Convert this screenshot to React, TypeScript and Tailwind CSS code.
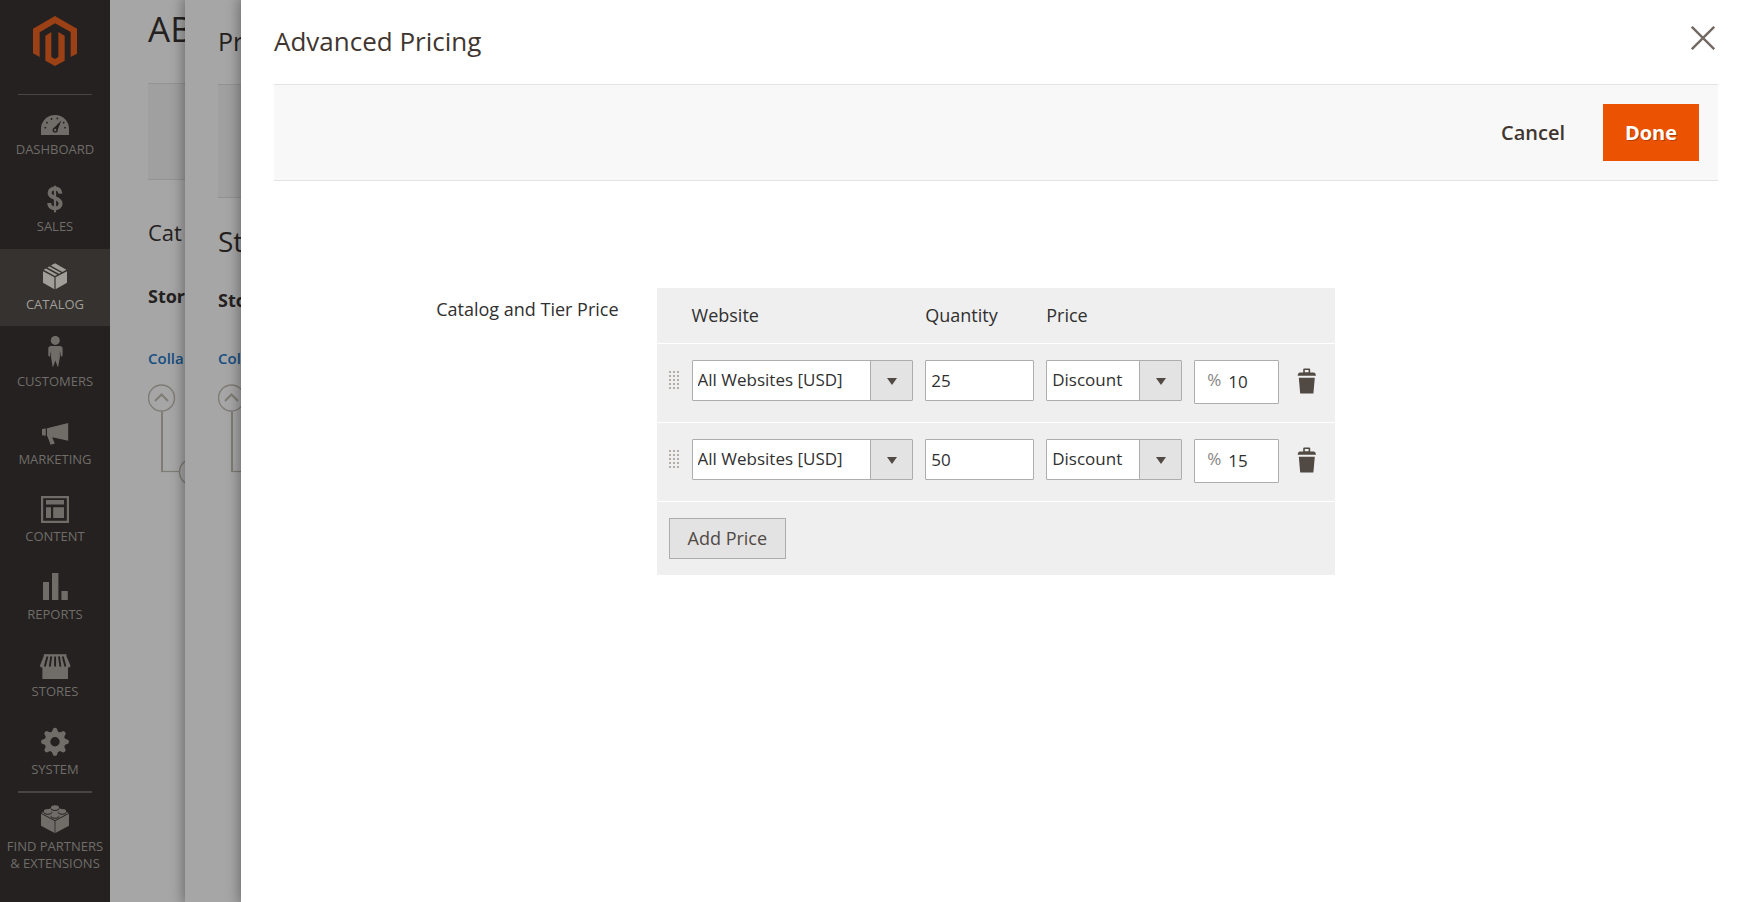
import { useState, type ReactNode } from "react";

type NavItem = { label: string; icon: ReactNode; active?: boolean };

const teeth = [0, 45, 90, 135, 180, 225, 270, 315];

const navItems: NavItem[] = [
  {
    label: "Dashboard",
    icon: (
      <>
        <path d="M4 31V25a14 14 0 0 1 28 0v6z" />
        <g fill="#242120">
          <circle cx="8.3" cy="23.7" r="0.9" />
          <circle cx="10" cy="18.7" r="0.9" />
          <circle cx="14.5" cy="15" r="0.9" />
          <circle cx="20.3" cy="14.4" r="0.9" />
          <circle cx="26.7" cy="18.7" r="0.9" />
          <circle cx="28" cy="23.7" r="0.9" />
          <path d="M24.3 16.4L20.4 26.4L16.6 24.3z" />
          <circle cx="18.2" cy="26" r="2.6" />
        </g>
        <circle cx="18.2" cy="26" r="1.2" />
      </>
    ),
  },
  {
    label: "Sales",
    icon: (
      <g fill="none" stroke="currentColor">
        <path
          strokeWidth="4"
          d="M23.4 12.6C23 9 20.8 7.6 18 7.6C14.6 7.6 12.6 9.4 12.6 12C12.6 18 23.6 16 23.6 22.4C23.6 25.6 21.3 27.3 18 27.3C14.6 27.3 12.4 25.6 12.2 22"
        />
        <path strokeWidth="2.2" d="M18 4.7V31.3" />
      </g>
    ),
  },
  {
    label: "Catalog",
    active: true,
    icon: (
      <>
        <path d="M6 12.2L17.4 18.2V30.2L6 23.8z" />
        <path d="M18.6 18.2L30 12.2V23.8L18.6 30.2z" />
        <path d="M18 4.2L29.4 10.7L25.4 12.9L13.8 6.6z" />
        <path d="M12.4 7.4L24 13.7L22 14.8L10.4 8.5z" />
        <path d="M9 9.4L20.4 15.7L18 17.1L6.6 10.8z" />
      </>
    ),
  },
  {
    label: "Customers",
    icon: (
      <>
        <circle cx="18.3" cy="4.4" r="4.5" />
        <path d="M14 10H22.8C24.6 10 25.6 11 25.6 12.8V19.5L24 21L22.8 14.5L22.9 21L21.2 30.8H20.6L18.4 24.5L16.2 30.8H15.6L14 21L14.1 14.5L12.9 21L11.3 19.5V12.8C11.3 11 12.3 10 14 10z" />
      </>
    ),
  },
  {
    label: "Marketing",
    icon: (
      <>
        <path d="M5 15L8.8 14.4V21.8L5 21.2z" />
        <path d="M10 14.2L31.2 9V26.8L15.2 23.2L17.8 29.4L13.6 30.7L10.4 22.2H10z" />
      </>
    ),
  },
  {
    label: "Content",
    icon: (
      <>
        <path fillRule="evenodd" d="M4 5H32V32H4zM6.2 7.2V29.8H29.8V7.2z" />
        <path d="M9 9H27V13.6H9zM9 16.2H14V27H9zM16.2 16.2H27V27H16.2z" />
      </>
    ),
  },
  {
    label: "Reports",
    icon: <path d="M6 13H12V31H6zM15 4H21.4V31H15zM24.4 22H30.8V31H24.4z" />,
  },
  {
    label: "Stores",
    icon: (
      <>
        <path d="M6.8 8.2H29.4V10H6.8z" />
        <path d="M6.8 10H29.4L33.4 19.4C33.2 21 32.4 21.6 31 21.6V33H5.4V21.6C4 21.6 3.2 21 3 19.4z" />
        <g stroke="#242120" strokeWidth="1.9">
          <path d="M10.4 10.4L7.8 20.6M14.2 10.4L12.8 20.6M18.1 10.4V20.6M22 10.4L23.4 20.6M25.8 10.4L28.4 20.6" />
        </g>
      </>
    ),
  },
  {
    label: "System",
    icon: (
      <>
        <circle cx="18" cy="17.8" r="7.6" fill="none" stroke="currentColor" strokeWidth="5.8" />
        {teeth.map((angle) => (
          <path key={angle} d="M14.2 9.6L16.2 4.4Q18 3.2 19.8 4.4L21.8 9.6z" transform={`rotate(${angle} 18 17.8)`} />
        ))}
      </>
    ),
  },
];

function NavIcon({ children }: { children: ReactNode }) {
  return (
    <svg viewBox="0 0 36 36" className="size-9 shrink-0" fill="currentColor" aria-hidden="true">
      {children}
    </svg>
  );
}

function Sidebar() {
  return (
    <aside className="w-[110px] shrink-0 bg-[#242120] text-[13px] leading-[18px] text-[#706d69]">
      <a href="#home" aria-label="Home" className="flex h-[94px] justify-center pt-4">
        <svg viewBox="99 47 132 150" className="h-[50px] w-11" fill="#9c4016" aria-hidden="true">
          <path d="M165 47L231 85V160L212 170V95L165 69L119 96V170L99 159V85z" />
          <path d="M136 106L154 95V170L165 176L175 170V95L194 106V181L165 197L136 181z" />
        </svg>
      </a>
      <nav>
        <hr className="mx-[18px] -mb-px border-[#4a4542]" />
        <ul>
          {navItems.map((item) => (
            <li key={item.label} className="h-[77px] even:h-[78px]">
              <a
                href={`#${item.label.toLowerCase()}`}
                className={
                  item.active
                    ? "flex h-full flex-col items-center bg-[#35322f] pt-[10px] uppercase text-[#a19e99]"
                    : "flex h-full flex-col items-center pt-[10px] uppercase"
                }
              >
                <NavIcon>{item.icon}</NavIcon>
                <span>{item.label}</span>
              </a>
            </li>
          ))}
        </ul>
        <hr className="mx-[18px] border-t-2 border-[#4a4542]" />
        <a href="#partners" className="flex flex-col items-center pt-2 text-center uppercase">
          <NavIcon>
            <path d="M4 12.8L17.6 20V32L4 24.8z" />
            <path d="M18.4 20L32 12.8V24.8L18.4 32z" />
            <path d="M18 4.8L31.6 12L18 19.2L4.4 12z" />
            <g stroke="#242120" strokeWidth="1">
              <ellipse cx="18" cy="7.4" rx="4" ry="2.1" />
              <ellipse cx="10.8" cy="11.2" rx="4" ry="2.1" />
              <ellipse cx="25.2" cy="11.2" rx="4" ry="2.1" />
              <ellipse cx="18" cy="15.2" rx="4" ry="2.1" />
            </g>
            <ellipse cx="18" cy="6.2" rx="4" ry="2" />
            <ellipse cx="10.8" cy="10" rx="4" ry="2" />
            <ellipse cx="25.2" cy="10" rx="4" ry="2" />
            <ellipse cx="18" cy="14" rx="4" ry="2" />
          </NavIcon>
          <span className="pt-px leading-[17px]">
            Find Partners
            <br />
            &amp; Extensions
          </span>
        </a>
      </nav>
    </aside>
  );
}

function TreeBranch() {
  return (
    <svg width="60" height="104" viewBox="0 0 60 104" className="shrink-0" fill="none" stroke="#7f7c75" aria-hidden="true">
      <circle cx="13.5" cy="14" r="13" strokeWidth="1.4" />
      <path d="M7 17L13.5 10.5L20 17" strokeWidth="2" />
      <path d="M14 27.5V87" strokeWidth="2" />
      <path d="M13 87.5H31" strokeWidth="1.2" />
      <circle cx="44.5" cy="88" r="13" strokeWidth="1.4" />
    </svg>
  );
}

function ProductPage() {
  return (
    <section className="w-[75px] shrink-0 overflow-hidden whitespace-nowrap bg-[#a6a6a6] pl-[38px] text-[#242120]">
      <h1 className="h-[83px] pt-[3px] text-[35px] leading-[52px]">AB</h1>
      <div className="h-[97px] border-y border-[#939393] bg-[#a0a0a0]" />
      <h2 className="mt-9 text-[22px] leading-8 font-medium">Cat</h2>
      <p className="mt-9 text-[18px] leading-6 font-bold">Store</p>
      <a href="#collapse" className="mt-10 block text-[15px] leading-5 font-semibold text-[#164f82]">
        Colla
      </a>
      <div className="mt-4">
        <TreeBranch />
      </div>
    </section>
  );
}

function StorePanel() {
  return (
    <section className="relative w-14 shrink-0 bg-[#a6a6a6] text-[#242120] shadow-[0_0_12px_2px_rgba(0,0,0,0.35)]">
      <div className="overflow-hidden whitespace-nowrap pl-[33px]">
        <h2 className="h-[84px] pt-[23px] text-[25px] leading-9">Pr</h2>
        <div className="h-[114px] border-y border-[#939393] bg-[#a0a0a0]" />
        <h3 className="mt-[23px] text-[28px] leading-10">St</h3>
        <p className="mt-[27px] text-[18px] leading-6 font-bold">Sto</p>
        <a href="#collapse-all" className="mt-9 block text-[15px] leading-5 font-semibold text-[#164f82]">
          Col
        </a>
        <div className="mt-4">
          <TreeBranch />
        </div>
      </div>
    </section>
  );
}

function SelectBox({ label, options }: { label: string; options: string[] }) {
  return (
    <div className="relative">
      <select
        aria-label={label}
        className="block h-[41px] w-full appearance-none rounded-[1px] border border-[#adadad] bg-white pr-11 pl-[5px] text-[17px] text-[#303030]"
      >
        {options.map((option) => (
          <option key={option}>{option}</option>
        ))}
      </select>
      <span className="pointer-events-none absolute inset-y-px right-px flex w-[42px] items-center justify-center border-l border-[#adadad] bg-[#e3e3e3]">
        <svg width="10" height="7" viewBox="0 0 10 7" fill="#514943" className="mt-[3px]" aria-hidden="true">
          <path d="M0 0H10L5 7z" />
        </svg>
      </span>
    </div>
  );
}

function TierRow({ quantity, amount, onRemove }: { quantity: string; amount: string; onRemove: () => void }) {
  return (
    <tr className="border-t border-white align-top">
      <td className="pt-[27px] pl-3">
        <svg width="10" height="18" viewBox="0 0 10 18" fill="#b3aea8" aria-hidden="true">
          {[0, 4, 8, 12, 16].map((y) =>
            [0, 4, 8].map((x) => <rect key={`${x}-${y}`} x={x} y={y} width="2" height="2" />),
          )}
        </svg>
      </td>
      <td className="px-[6px] pt-4 pb-[21px]">
        <SelectBox label="Website" options={["All Websites [USD]", "Main Website [USD]"]} />
      </td>
      <td className="px-[6px] pt-4">
        <input
          aria-label="Quantity"
          defaultValue={quantity}
          className="block h-[41px] w-full rounded-[1px] border border-[#adadad] bg-white px-[5px] text-[17px] text-[#303030]"
        />
      </td>
      <td className="px-[6px] pt-4">
        <SelectBox label="Price type" options={["Discount", "Fixed"]} />
      </td>
      <td className="px-[6px] pt-4">
        <label className="flex h-11 items-center rounded-[1px] border border-[#adadad] bg-white pl-3 text-[17px]">
          <span className="pb-1 text-[#858585]">%</span>
          <input
            aria-label="Discount percent"
            defaultValue={amount}
            className="ml-[7px] w-full min-w-0 bg-transparent text-[#303030] outline-none"
          />
        </label>
      </td>
      <td className="pt-[21px] pl-2">
        <button type="button" aria-label="Delete" onClick={onRemove} className="flex h-8 w-7 items-center justify-center">
          <svg width="20" height="26" viewBox="0 0 20 26" fill="#514943" aria-hidden="true">
            <path fillRule="evenodd" d="M6.2 4.4V1.4Q6.2 0.4 7.2 0.4H12.2Q13.2 0.4 13.2 1.4V4.4H17Q18.8 4.8 19 7.8H0.6Q0.8 4.8 2.6 4.4zM7.8 4.2H11.6V2H7.8z" />
            <path d="M1.8 9.8H17.8L16.4 25.6H3.2z" />
          </svg>
        </button>
      </td>
    </tr>
  );
}

export default function App() {
  const [rows, setRows] = useState([
    { id: 1, quantity: "25", amount: "10" },
    { id: 2, quantity: "50", amount: "15" },
  ]);

  return (
    <div className="flex min-h-screen bg-white font-['Open_Sans',sans-serif]">
      <Sidebar />
      <ProductPage />
      <StorePanel />
      <main className="relative min-w-0 flex-1 bg-white pr-[31px] pl-[33px] shadow-[0_0_12px_2px_rgba(0,0,0,0.35)]">
        <header className="flex h-[84px] items-start justify-between">
          <h1 className="pt-[23px] text-[26px] leading-9 text-[#41362f]">Advanced Pricing</h1>
          <button type="button" aria-label="Close" className="mt-[26px] mr-[3px]">
            <svg width="24" height="24" viewBox="0 0 24 24" stroke="#736963" strokeWidth="2.4" aria-hidden="true">
              <path d="M0.8 0.8L23.2 23.2M23.2 0.8L0.8 23.2" />
            </svg>
          </button>
        </header>
        <div className="flex h-[97px] items-center justify-end gap-[38px] border-y border-[#e3e3e3] bg-[#f8f8f8] pr-[19px]">
          <button type="button" className="text-[20px] leading-7 font-semibold text-[#41362f]">
            Cancel
          </button>
          <button
            type="button"
            className="h-[57px] w-24 bg-[#eb5202] text-[20px] leading-7 font-bold text-white [text-shadow:1px_1px_0_rgba(0,0,0,0.25)]"
          >
            Done
          </button>
        </div>
        <section className="mt-[107px] flex items-start">
          <h2 id="tier-label" className="w-[24%] pt-[9px] pr-0.5 text-right text-[18px] leading-6 font-medium text-[#303030]">
            Catalog and Tier Price
          </h2>
          <div className="ml-9 w-[47%] min-w-[678px] bg-[#efefef]">
            <table aria-labelledby="tier-label" className="w-full table-fixed border-collapse text-left">
              <colgroup>
                <col className="w-[29px]" />
                <col />
                <col className="w-[121px]" />
                <col className="w-[148px]" />
                <col className="w-[97px]" />
                <col className="w-[50px]" />
              </colgroup>
              <thead>
                <tr className="h-[55px] text-[18px] leading-6 text-[#303030]">
                  <td />
                  <th className="px-[6px] font-medium">Website</th>
                  <th className="px-[6px] font-medium">Quantity</th>
                  <th className="px-[6px] font-medium">Price</th>
                  <td />
                  <td />
                </tr>
              </thead>
              <tbody>
                {rows.map((row) => (
                  <TierRow
                    key={row.id}
                    quantity={row.quantity}
                    amount={row.amount}
                    onRemove={() => setRows(rows.filter((other) => other.id !== row.id))}
                  />
                ))}
              </tbody>
            </table>
            <div className="border-t border-white px-3 py-4">
              <button
                type="button"
                onClick={() => setRows([...rows, { id: Date.now(), quantity: "", amount: "" }])}
                className="h-[41px] border border-[#adadad] bg-[#e3e3e3] px-[18px] text-[18px] leading-6 font-medium text-[#514943]"
              >
                Add Price
              </button>
            </div>
          </div>
        </section>
      </main>
    </div>
  );
}
